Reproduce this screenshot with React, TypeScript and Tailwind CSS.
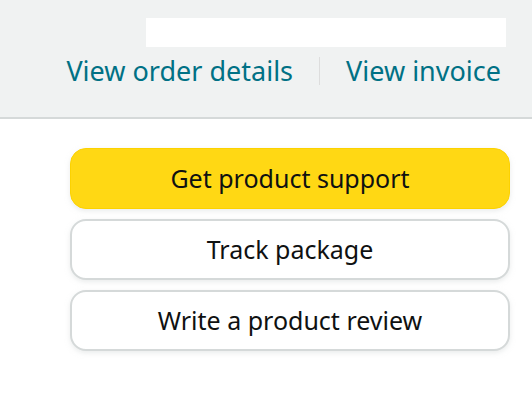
import React from "react";

const buttons = [
  { label: "Get product support", primary: true },
  { label: "Track package", primary: false },
  { label: "Write a product review", primary: false },
];

const App: React.FC = () => {
  return (
    <div className="w-[532px] h-[418px] bg-white font-['Noto_Sans',sans-serif] overflow-hidden">
      <div className="h-[119px] bg-[#f0f2f2] border-b-2 border-[#d5d9d9] flex flex-col items-end pr-[22px] pt-[18px]">
        <div className="w-[360px] h-[29px] bg-white mr-[4px]" />
        <div className="flex items-center mt-[6px] mr-[9px] text-[27px] text-[#007185] leading-[36px]">
          <a href="#" className="hover:underline">View order details</a>
          <span className="w-px h-[28px] bg-[#dddddd] mx-[26px]" />
          <a href="#" className="hover:underline">View invoice</a>
        </div>
      </div>
      <div className="flex flex-col gap-[10px] pl-[70px] pr-[22px] pt-[29px]">
        {buttons.map((b) => (
          <button
            key={b.label}
            className={
              b.primary
                ? "h-[61px] rounded-[16px] bg-[#ffd814] border border-[#fcd200] shadow-[0_2px_5px_rgba(213,217,217,0.5)] text-[25px] text-[#0f1111]"
                : "h-[61px] rounded-[16px] bg-white border-2 border-[#d5d9d9] shadow-[0_2px_5px_rgba(213,217,217,0.5)] text-[25px] text-[#0f1111]"
            }
          >
            {b.label}
          </button>
        ))}
      </div>
    </div>
  );
};

export default App;
